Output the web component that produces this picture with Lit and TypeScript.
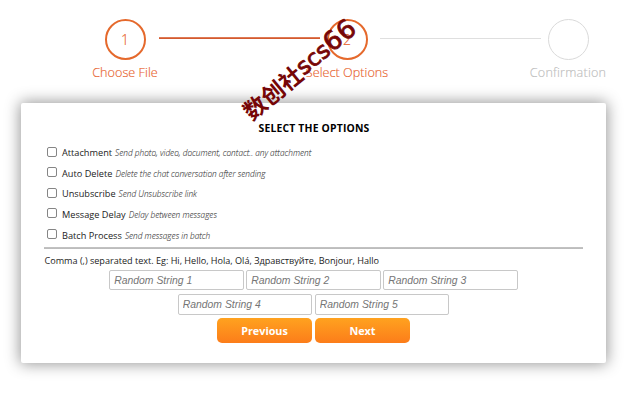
import { LitElement, html, css } from "lit";
import { customElement } from "lit/decorators.js";

const OPTIONS: [string, string][] = [
  ["Attachment", "Send photo, video, document, contact.. any attachment"],
  ["Auto Delete", "Delete the chat conversation after sending"],
  ["Unsubscribe", "Send Unsubscribe link"],
  ["Message Delay", "Delay between messages"],
  ["Batch Process", "Send messages in batch"],
];

@customElement("app-root")
export class AppRoot extends LitElement {
  static styles = css`
    :host {
      display: block;
      width: 640px;
      height: 400px;
      overflow: hidden;
      position: relative;
      background: #fff;
      font-family: "Open Sans", "Liberation Sans", sans-serif;
      color: #222;
    }
    * { box-sizing: border-box; }
    .wizard {
      display: flex;
      align-items: flex-start;
      padding: 18px 0 0 75px;
      height: 102.5px;
    }
    .step {
      width: 100px;
      flex: none;
      display: flex;
      flex-direction: column;
      align-items: center;
      color: #e8622c;
      font-size: 12.6px;
      font-weight: 300;
      letter-spacing: 0.04px;
      white-space: nowrap;
      -webkit-text-stroke: 0.15px currentColor;
    }
    .circle {
      width: 41px;
      height: 41px;
      margin-top: 0.5px;
      border: 2px solid #e5692c;
      border-radius: 50%;
      display: flex;
      align-items: center;
      justify-content: center;
      font-size: 14px;
    }
    .label { line-height: 18px; margin-top: 4px; }
    .off { color: #bdbdbd; letter-spacing: 0.22px; }
    .off .circle { border: 1px solid #dadada; }
    .line {
      flex: none;
      width: 161px;
      height: 2px;
      margin: 19px -23px 0 -16px;
      background: linear-gradient(#e58a68, #cc4a1c);
    }
    .line.rest { height: 1px; margin-top: 20px; margin-left: -17px; background: #dfdfdf; }
    .card {
      width: 585px;
      height: 260px;
      margin-left: 21px;
      padding: 17px 23px 0;
      background: #fff;
      border-radius: 2px;
      box-shadow: 0 0 15px 1px rgba(0, 0, 0, 0.42);
      display: flex;
      flex-direction: column;
    }
    .title {
      margin: 0;
      padding-left: 1px;
      text-align: center;
      font-size: 10.4px;
      letter-spacing: 0.18px;
      line-height: 16px;
      font-weight: 700;
      color: #000;
    }
    .options { margin-top: 7.5px; display: flex; flex-direction: column; }
    .option {
      height: 20.6px;
      display: flex;
      align-items: center;
      padding-left: 3px;
      font-size: 9.2px;
      line-height: 14px;
      white-space: nowrap;
    }
    .option input {
      appearance: none;
      width: 10px;
      height: 10px;
      margin: 0 5px 3.5px 0;
      border: 1px solid #858585;
      border-radius: 2px;
      background: #fff;
    }
    .option .hint {
      margin-left: 3px;
      font-size: 8.25px;
      font-style: italic;
      font-weight: 300;
      color: #444;
      -webkit-text-stroke: 0.1px currentColor;
    }
    .rule { flex: none; height: 2px; background: linear-gradient(#c4c4c4, #bababa); margin-top: 1px; width: 539px; }
    .note { font-size: 9.1px; letter-spacing: -0.01px; line-height: 14px; margin-top: 5px; padding-left: 0.5px; white-space: nowrap; }
    .fields { display: flex; justify-content: center; gap: 2.5px; margin-top: 2px; }
    .fields + .fields { margin-top: 4px; }
    .field {
      width: 134.5px;
      height: 20.5px;
      border: 1px solid #c8c8c8;
      border-radius: 2px;
      padding: 0 4px;
      font: italic 10.4px "Liberation Sans", Arial, sans-serif;
      color: #444;
      outline: none;
    }
    .field::placeholder { color: #757575; opacity: 1; }
    .actions { display: flex; justify-content: center; gap: 3px; margin-top: 3.5px; }
    .btn {
      width: 95px;
      height: 25px;
      padding: 0;
      border: 0;
      border-radius: 5px;
      background: linear-gradient(#ffa21f, #fc7d1a);
      color: #fff;
      font: 700 10.8px "Open Sans", sans-serif;
    }
    .mark {
      position: absolute;
      left: 298.5px;
      top: 68.5px;
      transform: translate(-50%, -50%) rotate(-39.5deg);
      display: flex;
      align-items: center;
      font: 700 23px/26px "Noto Sans CJK SC", sans-serif;
      color: #760607;
      white-space: nowrap;
    }
    .latin {
      font: 400 23px/26px "DejaVu Sans", sans-serif;
      -webkit-text-stroke: 0.8px #760607;
    }
    .digits { font-size: 26px; letter-spacing: 0.5px; }
  `;

  render() {
    return html`
      <div class="wizard">
        <div class="step"><div class="circle">1</div><div class="label">Choose File</div></div>
        <div class="line"></div>
        <div class="step"><div class="circle">2</div><div class="label">Select Options</div></div>
        <div class="line rest"></div>
        <div class="step off"><div class="circle"></div><div class="label">Confirmation</div></div>
      </div>
      <section class="card">
        <h1 class="title">SELECT THE OPTIONS</h1>
        <div class="options">
          ${OPTIONS.map(
            ([name, hint]) => html`<label class="option"><input type="checkbox" /><span>${name}</span><span class="hint">${hint}</span></label>`
          )}
        </div>
        <div class="rule"></div>
        <div class="note">Comma (,) separated text. Eg: Hi, Hello, Hola, Olá, Здравствуйте, Bonjour, Hallo</div>
        <div class="fields">${[1, 2, 3].map((n) => html`<input class="field" placeholder="Random String ${n}" />`)}</div>
        <div class="fields">${[4, 5].map((n) => html`<input class="field" placeholder="Random String ${n}" />`)}</div>
        <div class="actions"><button class="btn">Previous</button><button class="btn">Next</button></div>
      </section>
      <div class="mark"><span>数创社</span><span class="latin">scs<span class="digits">66</span></span></div>
    `;
  }
}
